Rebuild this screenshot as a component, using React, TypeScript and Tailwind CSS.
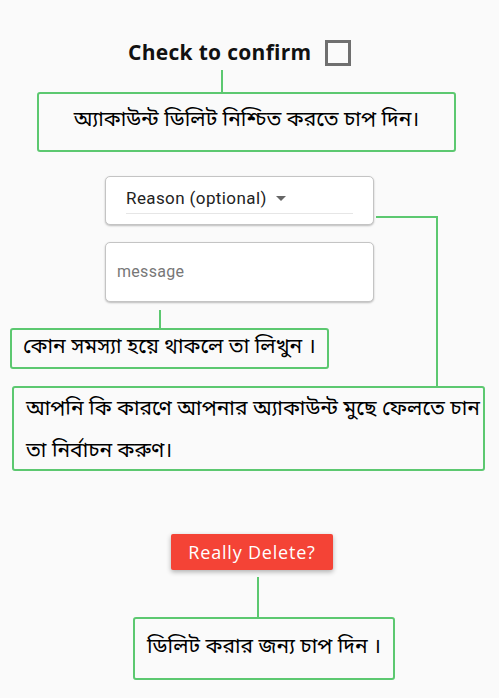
import React from "react";

const bn = { fontFamily: '"Noto Sans Bengali", "Noto Serif Bengali", "Lohit Bengali", "Noto Sans", sans-serif' };

export default function App() {
  return (
    <div className="relative w-full min-h-[698px] bg-[#fafafa] overflow-hidden">
      {/* right connector overlay */}
      <div className="absolute left-[376px] top-[216px] w-[62px] h-[2px] bg-[#5cc870]" />
      <div className="absolute left-[436px] top-[216px] w-[2px] h-[171px] bg-[#5cc870]" />

      <div className="flex flex-col pt-[39px]">
        <div className="flex items-center ml-[128px] h-[27px]">
          <span
            className="text-[21px] font-bold text-[#111] leading-none tracking-[0.3px]"
            style={{ fontFamily: '"Open Sans", "Liberation Sans", sans-serif' }}
          >
            Check to confirm
          </span>
          <div className="ml-[13px] w-[26px] h-[26px] border-[3px] border-[#6f6f6f]" />
        </div>
        <div className="ml-[221px] mt-[4px] w-[2px] h-[22px] bg-[#5cc870]" />
        <div className="ml-[37px] w-[419px] h-[60px] border-2 border-[#5cc870] rounded-[3px] flex items-center justify-center">
          <span className="text-[21px] text-black" style={bn}>
            অ্যাকাউন্ট ডিলিট নিশ্চিত করতে চাপ দিন।
          </span>
        </div>

        <div className="ml-[105px] mt-[24px] w-[269px] h-[49px] bg-white border border-[#c4c4c4] rounded-[5px] shadow-[0_1px_2px_rgba(0,0,0,0.25)] px-[20px] pt-[11px]">
          <div className="flex items-center h-[26px] border-b border-[#e6e6e6] pb-[4px]">
            <span
              className="text-[17px] text-[#222] tracking-[0.4px]"
              style={{ fontFamily: 'Roboto, "Liberation Sans", sans-serif' }}
            >
              Reason (optional)
            </span>
            <svg className="ml-[9px]" width="10" height="5" viewBox="0 0 10 5">
              <path d="M0 0 L10 0 L5 5 Z" fill="#666" />
            </svg>
          </div>
        </div>

        <div className="ml-[105px] mt-[17px] w-[269px] h-[60px] bg-white border border-[#c4c4c4] rounded-[5px] shadow-[0_1px_2px_rgba(0,0,0,0.25)] flex items-center px-[11px]">
          <span
            className="text-[16px] text-[#777] tracking-[0.3px]"
            style={{ fontFamily: 'Roboto, "Liberation Sans", sans-serif' }}
          >
            message
          </span>
        </div>

        <div className="ml-[159px] mt-[8px] w-[2px] h-[18px] bg-[#5cc870]" />
        <div className="ml-[10px] w-[319px] h-[41px] border-2 border-[#5cc870] rounded-[3px] flex items-center pl-[11px]">
          <span className="text-[21px] text-black whitespace-nowrap" style={bn}>
            কোন সমস্যা হয়ে থাকলে তা লিখুন ।
          </span>
        </div>

        <div className="ml-[12px] mt-[17px] w-[473px] h-[85px] border-2 border-[#5cc870] rounded-[3px] pl-[12px] pr-[8px] pt-[1px] overflow-hidden">
          <div className="text-[21px] text-black leading-[42px] whitespace-nowrap" style={bn}>
            আপনি কি কারণে আপনার অ্যাকাউন্ট মুছে ফেলতে চান
            <br />
            তা নির্বাচন করুণ।
          </div>
        </div>

        <div className="ml-[171px] mt-[63px] w-[162px] h-[36px] bg-[#f44336] rounded-[2px] shadow-[0_2px_5px_rgba(0,0,0,0.3)] flex items-center justify-center">
          <span
            className="text-[18px] text-white tracking-[0.8px]"
            style={{ fontFamily: '"Open Sans", "Liberation Sans", sans-serif' }}
          >
            Really Delete?
          </span>
        </div>
        <div className="ml-[257px] mt-[7px] w-[2px] h-[40px] bg-[#5cc870]" />
        <div className="ml-[133px] w-[262px] h-[63px] border-2 border-[#5cc870] rounded-[3px] flex items-center justify-center">
          <span className="text-[21px] text-black whitespace-nowrap" style={bn}>
            ডিলিট করার জন্য চাপ দিন ।
          </span>
        </div>
      </div>
    </div>
  );
}
